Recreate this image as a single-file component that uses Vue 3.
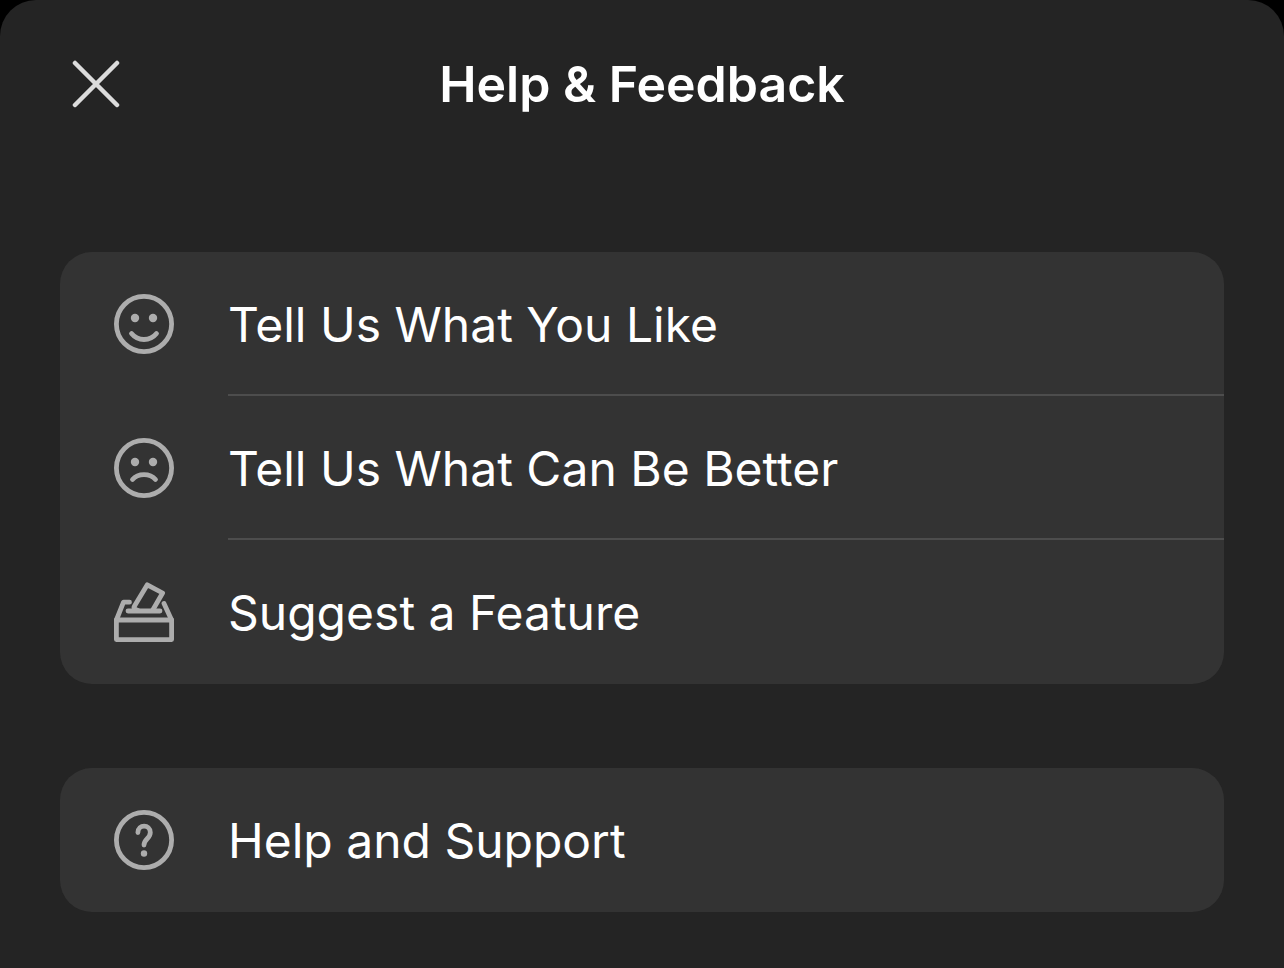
<template>
  <main class="sheet">
    <header class="sheet-header">
      <button class="close" type="button" aria-label="Close">
        <svg viewBox="0 0 48 48" aria-hidden="true">
          <path d="M3 3 45 45M45 3 3 45" />
        </svg>
      </button>
      <h1>Help &amp; Feedback</h1>
    </header>

    <ul v-for="(group, index) in groups" :key="index" class="group">
      <li v-for="item in group" :key="item.label">
        <button class="row" type="button">
          <svg class="icon" viewBox="0 0 60 60" aria-hidden="true">
            <template v-if="item.icon === 'box'">
              <rect x="2.4" y="38" width="55.2" height="19.6" />
              <path d="M2.4 38 9.5 20.2H15.5M57.6 38 50 21.5" />
              <path d="M14 29H46" />
              <path d="M24 28.5C21 27.5 19 26.500 20.500 24L33.300 2.800 48.600 11 38.500 28.500" />
            </template>
            <template v-else>
              <circle cx="30" cy="30" r="27.6" />
              <template v-if="item.icon === 'question'">
                <path d="M23.9 22.500C23.900 14 36.300 14 36.300 22.500C36.300 28.500 30 29 30 35" />
                <circle class="dot" cx="30" cy="43.5" r="3.2" />
              </template>
              <template v-else>
                <circle class="dot" cx="21" cy="24" r="4.2" />
                <circle class="dot" cx="39" cy="24" r="4.2" />
                <path v-if="item.icon === 'smile'" d="M17.5 39.500C24 47.500 36 47.500 42.500 39.500" />
                <path v-else d="M18.5 41.500C24 35 36 35 41.500 41.500" />
              </template>
            </template>
          </svg>
          <span class="label">{{ item.label }}</span>
        </button>
      </li>
    </ul>
  </main>
</template>

<script setup>
const groups = [
  [
    { label: 'Tell Us What You Like', icon: 'smile' },
    { label: 'Tell Us What Can Be Better', icon: 'frown' },
    { label: 'Suggest a Feature', icon: 'box' }
  ],
  [{ label: 'Help and Support', icon: 'question' }]
]
</script>

<style>
body {
  margin: 0;
  background: #000;
}
</style>

<style scoped>
.sheet {
  box-sizing: border-box;
  min-height: 100vh;
  padding: 0 60px 56px;
  border-radius: 36px 36px 0 0;
  background: #242424;
  color: #fff;
  font-family: Inter, "Liberation Sans", sans-serif;
}
.sheet-header {
  display: grid;
  grid-template-columns: 72px 1fr 72px;
  align-items: center;
  height: 168px;
}
h1 {
  margin: 0;
  font-size: 50px;
  font-weight: 600;
  line-height: 60px;
  text-align: center;
}
button {
  border: 0;
  background: none;
  color: inherit;
  font: inherit;
  cursor: pointer;
}
.close {
  padding: 12px;
}
.close svg {
  display: block;
  width: 48px;
  height: 48px;
  stroke: #dcdcdc;
  stroke-width: 4.5;
  stroke-linecap: round;
}
.group {
  margin: 84px 0 0;
  padding: 0;
  overflow: hidden;
  border-radius: 32px;
  background: #333;
  list-style: none;
}
.row {
  display: flex;
  align-items: center;
  gap: 54px;
  width: 100%;
  height: 144px;
  padding: 0 0 0 54px;
  text-align: left;
}
.icon {
  flex: none;
  width: 60px;
  height: 60px;
  fill: none;
  stroke: #adadad;
  stroke-width: 4.8;
  stroke-linecap: round;
  stroke-linejoin: round;
}
.dot {
  fill: #adadad;
  stroke: none;
}
.label {
  flex: 1;
  box-sizing: border-box;
  height: 144px;
  border-bottom: 2px solid #4d4d4d;
  font-size: 48px;
  line-height: 146px;
}
li:last-child .label {
  border-bottom: 0;
}
</style>
